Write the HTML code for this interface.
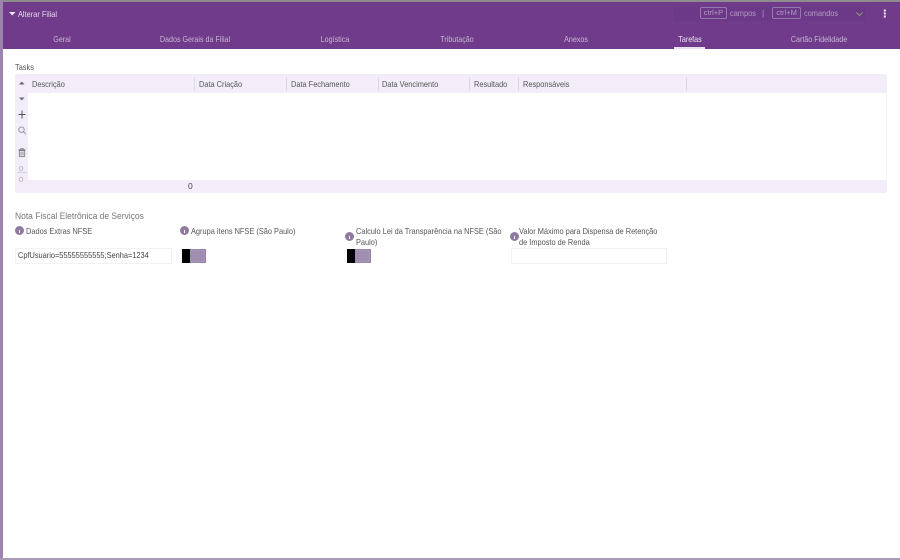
<!DOCTYPE html>
<html lang="pt">
<head>
<meta charset="utf-8">
<style>
html,body{margin:0;padding:0;background:#fff}
#p{position:relative;width:900px;height:560px;overflow:hidden;background:#fff;font-family:"Liberation Sans",sans-serif;font-size:8.5px;color:#4a4a4a;filter:blur(.35px)}
#p div{position:absolute;white-space:nowrap;line-height:11px}
.x{transform:scaleX(.87);transform-origin:0 50%}
.t{color:#c9b6d5;top:34px;transform:translateX(-50%) scaleX(.84);transform-origin:50% 50%}
.h{top:79px;color:#555}
.s{top:77px;width:1px;height:14px;background:#dcd6e0}
.l{color:#555}
.i{width:9px;height:9px;border-radius:50%;background:#8f7ba0}
.i:after{content:"";position:absolute;left:4px;top:3.5px;width:1.2px;height:3.5px;background:#fff}
.sw{width:24px;height:14px;background:#a597b5;box-sizing:border-box;border:1px solid #9484a5}
.sw:before{content:"";position:absolute;left:-1px;top:-1px;width:8px;height:14px;background:#000}
.sw:after{content:"";position:absolute;left:7px;top:1px;width:14px;height:10px;background:#a08eb0;box-sizing:border-box}
.k{border:1px solid #957ba9;border-radius:2px;color:#b29bc3;top:7px;height:12px;box-sizing:border-box;line-height:10px!important;text-align:center;font-size:7.5px}
.c{color:#b29bc3;top:8px}
</style>
</head>
<body>
<div id="p">
  <div style="left:0;top:0;width:900px;height:2px;background:#8d8d8d"></div>
  <div style="left:0;top:0;width:3px;height:560px;background:#9c84ae"></div>
  <div style="left:0;top:558px;width:900px;height:2px;background:#a99ab5"></div>
  <div style="left:3px;top:2px;width:897px;height:47px;background:#6f3b8a"></div>

  <svg style="position:absolute;left:9px;top:11px" width="7" height="5"><path d="M0 1h6.5L3.2 4.5z" fill="#f0e8f5"/></svg>
  <div class="x" style="left:18px;top:9px;color:#e4d8ec">Alterar Filial</div>

  <div style="left:673px;top:6px;width:192px;height:15px;background:#6c3988"></div>
  <div class="k" style="left:700px;width:27px">ctrl+P</div>
  <div class="c x" style="left:730px">campos</div>
  <div class="c" style="left:762px">|</div>
  <div class="k" style="left:772px;width:29px">ctrl+M</div>
  <div class="c x" style="left:804px">comandos</div>
  <svg style="position:absolute;left:856px;top:12px" width="7" height="5"><path d="M.5.5L3.5 3.5 6.5.5" fill="none" stroke="#8f9a70" stroke-width="1"/></svg>
  <svg style="position:absolute;left:883px;top:9px" width="4" height="9"><path d="M.8.5h2v2h-2zM.8 3.5h2v2h-2zM.8 6.5h2v2h-2z" fill="#f3edf7"/></svg>

  <div class="t" style="left:62px">Geral</div>
  <div class="t" style="left:195px">Dados Gerais da Filial</div>
  <div class="t" style="left:335px">Logística</div>
  <div class="t" style="left:457px">Tributação</div>
  <div class="t" style="left:576px">Anexos</div>
  <div class="t" style="left:690px;color:#eee6f3">Tarefas</div>
  <div class="t" style="left:819px">Cartão Fidelidade</div>
  <div style="left:674px;top:47px;width:31px;height:2px;background:#e8e0ee"></div>

  <div class="x" style="left:15px;top:62px;color:#555">Tasks</div>

  <div style="left:15px;top:74px;width:872px;height:19px;background:#f2edf8;border-radius:2px 2px 0 0"></div>
  <div style="left:15px;top:93px;width:13px;height:87px;background:#f2edf8"></div>
  <div style="left:15px;top:180px;width:872px;height:13px;background:#f2edf8;border-radius:0 0 2px 2px"></div>
  <div style="left:886px;top:93px;width:1px;height:87px;background:#f5f2f8"></div>

  <svg style="position:absolute;left:19px;top:81px" width="6" height="4"><path d="M0 3.5h5.5L2.8.5z" fill="#666"/></svg>
  <svg style="position:absolute;left:19px;top:97px" width="6" height="4"><path d="M0 .5h5.5L2.8 3.5z" fill="#77668a"/></svg>
  <svg style="position:absolute;left:18px;top:110px" width="8" height="9"><path d="M4 .5v8M.5 4.5h7" stroke="#555" stroke-width="1" fill="none"/></svg>
  <svg style="position:absolute;left:18px;top:126px" width="9" height="9"><circle cx="3.5" cy="3.7" r="2.7" fill="none" stroke="#999" stroke-width="1"/><path d="M5.5 5.7L8 8.3" stroke="#999" stroke-width="1"/></svg>
  <svg style="position:absolute;left:18px;top:148px" width="8" height="9"><path d="M.5 1.8h7M2.8 1.5V.6h2.4v.9M1.3 2.5h5.4v6H1.3zM3 3.5v4M5 3.5v4" fill="none" stroke="#777" stroke-width=".8"/></svg>
  <div style="left:19px;top:163px;font-size:7.5px;color:#aaa">0</div>
  <div style="left:17px;top:172px;width:10px;height:1px;background:#d4cede"></div>
  <div style="left:19px;top:174px;font-size:7.5px;color:#aaa">0</div>

  <div class="h x" style="left:32px">Descrição</div>
  <div class="s" style="left:194px"></div>
  <div class="h x" style="left:199px">Data Criação</div>
  <div class="s" style="left:286px"></div>
  <div class="h x" style="left:291px">Data Fechamento</div>
  <div class="s" style="left:378px"></div>
  <div class="h x" style="left:382px">Data Vencimento</div>
  <div class="s" style="left:469px"></div>
  <div class="h x" style="left:474px">Resultado</div>
  <div class="s" style="left:518px"></div>
  <div class="h x" style="left:523px">Responsáveis</div>
  <div class="s" style="left:686px"></div>
  <div style="left:188px;top:181px;color:#444">0</div>

  <div style="left:15px;top:211px;color:#777;font-size:9px;transform:scaleX(.94);transform-origin:0 50%">Nota Fiscal Eletrônica de Serviços</div>

  <div class="i" style="left:15px;top:226px"></div>
  <div class="l x" style="left:26px;top:226px">Dados Extras NFSE</div>
  <div class="i" style="left:180px;top:226px"></div>
  <div class="l x" style="left:191px;top:226px">Agrupa itens NFSE (São Paulo)</div>
  <div class="i" style="left:345px;top:232px"></div>
  <div class="l x" style="left:356px;top:226px">Calculo Lei da Transparência na NFSE (São<br>Paulo)</div>
  <div class="i" style="left:510px;top:232px"></div>
  <div class="l x" style="left:519px;top:226px">Valor Máximo para Dispensa de Retenção<br>de Imposto de Renda</div>

  <div style="left:15px;top:248px;width:157px;height:16px;border:1px solid #f3f0f6;box-sizing:border-box"></div>
  <div class="x" style="left:18px;top:250px;color:#444">CpfUsuario=55555555555;Senha=1234</div>
  <div class="sw" style="left:182px;top:249px"></div>
  <div class="sw" style="left:347px;top:249px"></div>
  <div style="left:511px;top:248px;width:156px;height:16px;border:1px solid #f3f0f6;box-sizing:border-box"></div>
</div>
</body>
</html>
